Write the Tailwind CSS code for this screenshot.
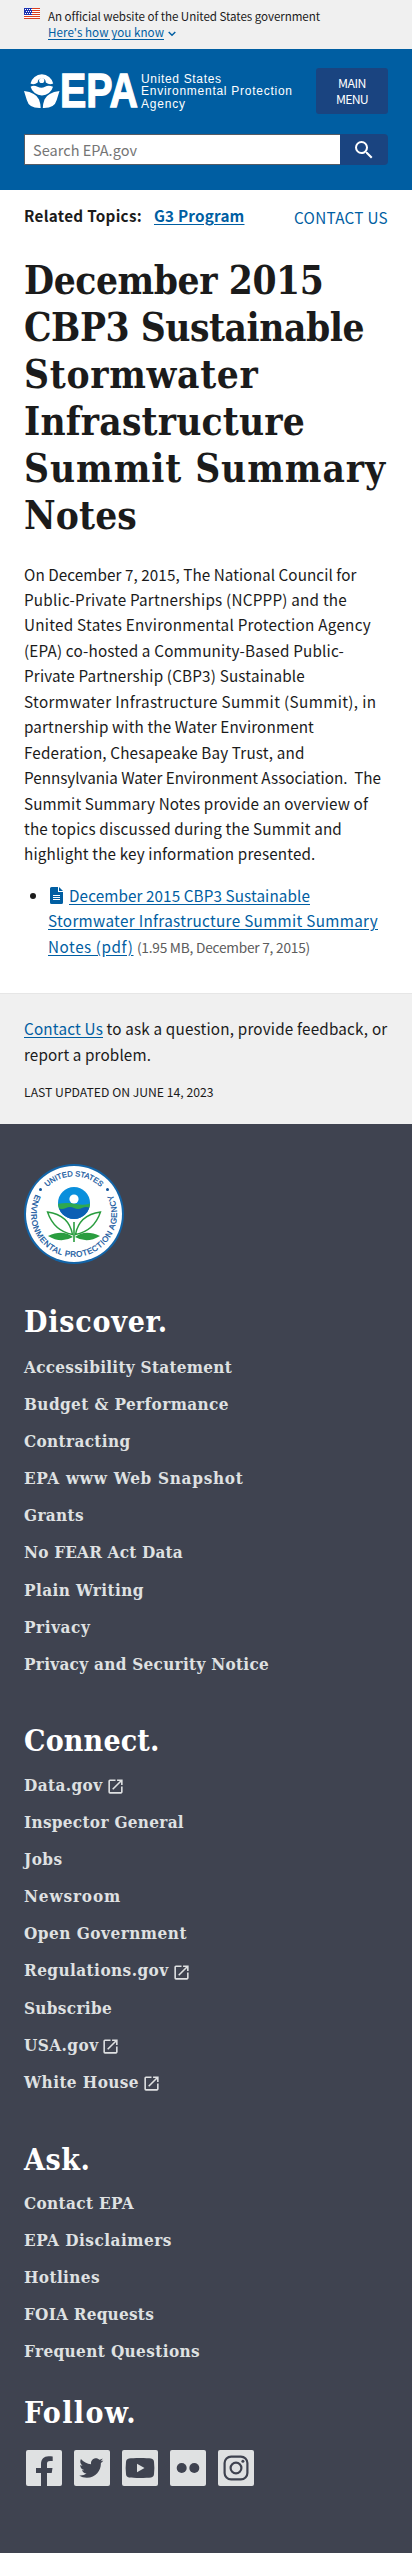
<!DOCTYPE html>
<html lang="en">
<head>
<meta charset="utf-8">
<meta name="viewport" content="width=device-width, initial-scale=1">
<title>December 2015 CBP3 Sustainable Stormwater Infrastructure Summit Summary Notes | US EPA</title>
<script src="https://cdn.jsdelivr.net/npm/@tailwindcss/browser@4"></script>
</head>
<body class="w-[412px] bg-white font-['Noto_Sans_CJK_SC','Open_Sans',sans-serif] text-[15.25px] leading-[25.5px] text-[#1b1b1b] whitespace-nowrap">

<section class="h-[49px] bg-[#f0f0f0] flex gap-2 px-6 pt-2">
  <svg class="w-4 h-[11px] shrink-0" viewBox="0 0 16 11">
    <rect width="16" height="11" fill="#fff"/>
    <path d="M0 .5h16M0 2.5h16M0 4.5h16M0 6.5h16M0 8.5h16M0 10.5h16" stroke="#db3e1f"/>
    <rect width="8" height="7" fill="#1e33b1"/>
    <path d="M1 1.5h7M2 3.5h6M1 5.5h7" stroke="#fff" stroke-dasharray="1 1"/>
  </svg>
  <div class="text-[11.6px] leading-4">
    <p><span data-w="272">An official website of the United States government</span></p>
    <a class="flex items-center text-[#005ea2]"><span class="underline underline-offset-2" data-w="116">Here's how you know</span>
      <svg class="w-2 h-2 ml-1 mt-1" viewBox="0 0 8 8" fill="none" stroke="#005ea2" stroke-width="1.5"><path d="M.7 2 4 5.2 7.3 2"/></svg></a>
  </div>
</section>

<header class="h-[141px] bg-[#005ea2] px-6 pt-[19px]">
  <div class="flex justify-between">
    <svg class="w-[272px] h-[46px] overflow-visible" viewBox="24 68 272 46" fill="#fff">
      <path d="M30.500 83.500A11.600 11.600 0 0 1 53.200 83.500Q49.500 85.500 45.800 82.500A4 4 0 1 0 37.700 82.500Q34 85.500 30.500 83.500Z"/>
      <circle cx="41.700" cy="80.500" r="2.600"/>
      <path d="M30.600 86.800Q33.500 84.800 37.500 86.700T45 86.700T53 86.800A11.600 11.600 0 0 1 42 95.500A11.600 11.600 0 0 1 30.600 86.800Z"/>
      <path d="M24 91Q36 92.500 39 99.500Q40.700 104 40.700 108Q29 108.500 26.800 100Z"/>
      <path d="M59.500 91Q47.500 92.500 44.500 99.500Q42.800 104 42.800 108Q54.500 108.500 56.700 100Z"/>
      <text x="60" y="106.800" font-family="Liberation Sans" font-weight="700" font-size="48" textLength="78" lengthAdjust="spacingAndGlyphs" stroke="#fff" stroke-width="1.300">EPA</text>
      <g font-family="Liberation Sans" font-size="12">
        <text x="141" y="82.500" textLength="80">United States</text>
        <text x="141" y="95" textLength="151">Environmental Protection</text>
        <text x="141" y="108" textLength="44">Agency</text>
      </g>
    </svg>
    <button class="w-[72px] h-[46px] bg-[#1a4480] rounded-[3px] text-white text-center text-[12.3px] leading-4"><span data-w="28">MAIN</span><br><span data-w="32">MENU</span></button>
  </div>
  <form class="mt-5 flex h-[31px]">
    <div class="w-[316px] h-[31px] bg-white border border-[#565c65] border-r-0 pl-2 text-[14.5px] leading-[29px] text-[#757575]"><span data-w="104">Search EPA.gov</span></div>
    <div class="w-12 bg-[#1a4480] rounded-r flex items-center justify-center">
      <svg class="w-6 h-6" viewBox="0 0 24 24" fill="#fff"><path d="M15.500 14h-.79l-.28-.27A6.471 6.471 0 0 0 16 9.500 6.500 6.500 0 1 0 9.500 16c1.610 0 3.090-.59 4.230-1.570l.27.28v.79l5 4.990L20.490 19l-4.990-5zm-6 0C7.010 14 5 11.990 5 9.500S7.010 5 9.500 5 14 7.010 14 9.500 11.990 14 9.500 14z"/></svg>
    </div>
  </form>
</header>

<main class="px-6 h-[803px]">
  <div class="flex justify-between pt-[13px]">
    <p class="font-bold flex"><span data-w="118">Related Topics:</span><a class="ml-[12px] text-[#005ea2] underline underline-offset-2" data-w="90.5">G3 Program</a></p>
    <a class="text-[#005ea2] pt-0.5" data-w="94">CONTACT US</a>
  </div>
  <h1 class="mt-[26px] font-['DejaVu_Serif_Condensed','DejaVu_Serif',serif] [font-stretch:condensed] font-bold text-[38.5px] leading-[47px] h-[285px]">
    <span data-w="299.5">December 2015</span><br>
    <span data-w="340">CBP3 Sustainable</span><br>
    <span data-w="234.5">Stormwater</span><br>
    <span data-w="281">Infrastructure</span><br>
    <span data-w="362">Summit Summary</span><br>
    <span data-w="113">Notes</span>
  </h1>
  <p class="mt-[20px] leading-[25.450px]">
    <span data-w="332.5">On December 7, 2015, The National Council for</span><br>
    <span data-w="323">Public-Private Partnerships (NCPPP) and the</span><br>
    <span data-w="347">United States Environmental Protection Agency</span><br>
    <span data-w="320">(EPA) co-hosted a Community-Based Public-</span><br>
    <span data-w="281">Private Partnership (CBP3) Sustainable</span><br>
    <span data-w="352.5">Stormwater Infrastructure Summit (Summit), in</span><br>
    <span data-w="290">partnership with the Water Environment</span><br>
    <span data-w="280.5">Federation, Chesapeake Bay Trust, and</span><br>
    <span class="whitespace-pre" data-w="357">Pennsylvania Water Environment Association.  The</span><br>
    <span data-w="344">Summit Summary Notes provide an overview of</span><br>
    <span data-w="318">the topics discussed during the Summit and</span><br>
    <span data-w="291.5">highlight the key information presented.</span>
  </p>
  <ul class="mt-4">
    <li class="flex">
      <span class="w-6 shrink-0 flex pl-1.5 pt-[10px]"><i class="block w-1.5 h-1.5 rounded-full bg-[#1b1b1b]"></i></span>
      <div>
        <a class="text-[#005ea2] underline underline-offset-2"><svg class="inline-block w-[13px] h-[17px] ml-[2px] mr-[6px] -mt-1" viewBox="0 0 13 17"><path fill="#005ea2" d="M1.500 0H8v5h5v10.500A1.500 1.500 0 0 1 11.500 17h-10A1.500 1.500 0 0 1 0 15.500v-14A1.500 1.500 0 0 1 1.500 0ZM9 0l4 4H9Z"/><path d="M3 8.500h7M3 10.500h7M3 12.500h7" stroke="#fff"/></svg><span data-w="241">December 2015 CBP3 Sustainable</span><br><span data-w="330">Stormwater Infrastructure Summit Summary</span><br><span data-w="85.5">Notes (pdf)</span></a>
        <span class="text-[13.700px] text-[#5c5c5c]" data-w="173">(1.95 MB, December 7, 2015)</span>
      </div>
    </li>
  </ul>
</main>

<section class="h-[131px] bg-[#f0f0f0] border-t border-[#e6e6e6] px-6 pt-[22px]">
  <p><a class="text-[#005ea2] underline underline-offset-2" data-w="79">Contact Us</a> <span data-w="281">to ask a question, provide feedback, or</span><br><span data-w="127">report a problem.</span></p>
  <p class="mt-[13px] text-[12.200px]"><span data-w="189.5">LAST UPDATED ON JUNE 14, 2023</span></p>
</section>

<footer class="h-[1429px] bg-[#3f4350] px-6 pt-10 font-['DejaVu_Serif_Condensed','DejaVu_Serif',serif] [font-stretch:condensed] font-bold text-[17px] leading-[37.100px] text-[#dfe1e2]">
  <svg class="w-[100px] h-[100px]" viewBox="-50 -50 100 100">
    <defs>
      <path id="ringTop" d="M-37.800 0A37.800 37.800 0 0 1 37.800 0"/>
      <path id="ringLow" d="M-38.700 -18.500A42.900 42.900 0 1 0 38.700 -18.500"/>
      <clipPath id="ball"><circle cy="-11" r="16"/></clipPath>
    </defs>
    <circle r="50" fill="#1365a8"/><circle r="48" fill="#fff"/>
    <g font-family="Liberation Sans" font-weight="400" fill="#10549c" stroke="#10549c" stroke-width=".25">
      <text font-size="7.600"><textPath href="#ringTop" startOffset="50%" text-anchor="middle">UNITED STATES</textPath></text>
      <text font-size="8" letter-spacing=".55"><textPath href="#ringLow" startOffset="50%" text-anchor="middle">ENVIRONMENTAL PROTECTION AGENCY</textPath></text>
    </g>
    <g fill="#10549c"><circle cx="-33.500" cy="-24.500" r="1.500"/><circle cx="33.500" cy="-24.500" r="1.500"/></g>
    <g clip-path="url(#ball)">
      <rect x="-17" y="-28" width="34" height="34" fill="#0a8fdc"/>
      <path d="M-17-10Q-6-12 2-10T17-11V-5H-17Z" fill="#2fa84f"/>
      <path d="M-17-6Q-12-4-8-6T0-6T8-6T17-6V6H-17Z" fill="#0c5fb4"/>
      <circle cy="-15" r="4.600" fill="#fff"/>
    </g>
    <path d="M0 8V28" stroke="#2a9d3f" stroke-width="1.600"/>
    <g fill="none" stroke="#2a9d3f" stroke-width="1.400"><path d="M-26.500-2Q-20 17-1.500 20.500Q-5 1-26.500-2Z"/><path d="M26.500-2Q20 17 1.500 20.500Q5 1 26.500-2Z"/></g>
    <path d="M-26 22Q-11 15-1 23Q-13 30-26 22ZM26 22Q11 15 1 23Q13 30 26 22Z" fill="#2a9d3f"/>
  </svg>
  <nav class="mt-[39px] h-[419px]">
    <h2 class="text-white text-[30px] leading-[38px] mb-[8px]"><span data-w="144">Discover.</span></h2>
    <ul>
      <li><span data-w="208">Accessibility Statement</span></li>
      <li><span data-w="205">Budget &amp; Performance</span></li>
      <li><span data-w="106.5">Contracting</span></li>
      <li><span data-w="219.5">EPA www Web Snapshot</span></li>
      <li><span data-w="60">Grants</span></li>
      <li><span data-w="159">No FEAR Act Data</span></li>
      <li><span data-w="120">Plain Writing</span></li>
      <li><span data-w="66.5">Privacy</span></li>
      <li><span data-w="245">Privacy and Security Notice</span></li>
    </ul>
  </nav>
  <nav class="h-[419px]">
    <h2 class="text-white text-[30px] leading-[38px] mb-[7px]"><span data-w="135.5">Connect.</span></h2>
    <ul>
      <li class="flex items-center gap-[3px]"><span data-w="78.5">Data.gov</span><svg class="w-[19px] h-[19px] mt-0.5" viewBox="0 0 24 24" fill="#dfe1e2"><path d="M19 19H5V5h7V3H5a2 2 0 0 0-2 2v14a2 2 0 0 0 2 2h14c1.100 0 2-.9 2-2v-7h-2v7zM14 3v2h3.590l-9.830 9.830 1.410 1.410L19 6.410V10h2V3h-7z"/></svg></li>
      <li><span data-w="160">Inspector General</span></li>
      <li><span data-w="38.5">Jobs</span></li>
      <li><span data-w="97">Newsroom</span></li>
      <li><span data-w="163">Open Government</span></li>
      <li class="flex items-center gap-[3px]"><span data-w="144.5">Regulations.gov</span><svg class="w-[19px] h-[19px] mt-0.5" viewBox="0 0 24 24" fill="#dfe1e2"><path d="M19 19H5V5h7V3H5a2 2 0 0 0-2 2v14a2 2 0 0 0 2 2h14c1.100 0 2-.9 2-2v-7h-2v7zM14 3v2h3.590l-9.830 9.830 1.410 1.410L19 6.410V10h2V3h-7z"/></svg></li>
      <li><span data-w="88">Subscribe</span></li>
      <li class="flex items-center gap-[3px]"><span data-w="74.5">USA.gov</span><svg class="w-[19px] h-[19px] mt-0.5" viewBox="0 0 24 24" fill="#dfe1e2"><path d="M19 19H5V5h7V3H5a2 2 0 0 0-2 2v14a2 2 0 0 0 2 2h14c1.100 0 2-.9 2-2v-7h-2v7zM14 3v2h3.590l-9.830 9.830 1.410 1.410L19 6.410V10h2V3h-7z"/></svg></li>
      <li class="flex items-center gap-[3px]"><span data-w="115">White House</span><svg class="w-[19px] h-[19px] mt-0.5" viewBox="0 0 24 24" fill="#dfe1e2"><path d="M19 19H5V5h7V3H5a2 2 0 0 0-2 2v14a2 2 0 0 0 2 2h14c1.100 0 2-.9 2-2v-7h-2v7zM14 3v2h3.590l-9.830 9.830 1.410 1.410L19 6.410V10h2V3h-7z"/></svg></li>
    </ul>
  </nav>
  <nav class="h-[253px]">
    <h2 class="text-white text-[30px] leading-[38px] mb-[6px]"><span data-w="66.5">Ask.</span></h2>
    <ul>
      <li><span data-w="110">Contact EPA</span></li>
      <li><span data-w="148">EPA Disclaimers</span></li>
      <li><span data-w="76">Hotlines</span></li>
      <li><span data-w="130">FOIA Requests</span></li>
      <li><span data-w="176">Frequent Questions</span></li>
    </ul>
  </nav>
  <h2 class="text-white text-[30px] leading-[38px]"><span data-w="113">Follow.</span></h2>
  <div class="mt-[18px] pl-0.5 flex gap-3">
    <svg class="w-9 h-9" viewBox="0 0 36 36"><rect width="36" height="36" rx="2" fill="#dfe1e2"/><path fill="#3f4350" d="M15 36V23H10v-5h5v-3.500C15 9 18 6.300 22.500 6.300c1.600 0 3 .1 4.200.3v4.300h-2.500c-2.600 0-3.200 1.200-3.200 3.100v4h5.500l-.8 5H21v13Z"/></svg>
    <svg class="w-9 h-9" viewBox="0 0 36 36"><rect width="36" height="36" rx="2" fill="#dfe1e2"/><g transform="translate(3.500 3.600) scale(1.150)"><path fill="#3f4350" d="M22.460 6c-.77.35-1.600.58-2.460.69.88-.53 1.560-1.370 1.880-2.380-.83.5-1.750.85-2.720 1.050C18.370 4.500 17.260 4 16 4c-2.350 0-4.270 1.920-4.270 4.290 0 .34.04.67.11.98C8.280 9.090 5.110 7.380 3 4.790c-.37.63-.58 1.370-.58 2.150 0 1.490.75 2.810 1.910 3.560-.71 0-1.370-.2-1.950-.5v.03c0 2.080 1.480 3.820 3.440 4.210a4.220 4.220 0 0 1-1.930.07 4.280 4.280 0 0 0 4 2.980 8.521 8.521 0 0 1-5.330 1.840c-.34 0-.68-.02-1.020-.06C3.440 20.290 5.700 21 8.120 21 16 21 20.330 14.460 20.330 8.790c0-.19 0-.37-.01-.56.84-.6 1.560-1.360 2.140-2.230z"/></g></svg>
    <svg class="w-9 h-9" viewBox="0 0 36 36"><rect width="36" height="36" rx="2" fill="#dfe1e2"/><path fill="#3f4350" d="M18 8c5 0 9 .2 11 .5 2 .4 3 1.500 3 3.500.5 4 .5 8 0 12 0 2-1 3.100-3 3.500-4 .6-18 .6-22 0-2-.4-3-1.500-3-3.500-.5-4-.5-8 0-12 0-2 1-3.100 3-3.500C9 8.200 13 8 18 8Z"/><path d="M15 13.800 22.500 18 15 22.200Z" fill="#dfe1e2"/></svg>
    <svg class="w-9 h-9" viewBox="0 0 36 36"><rect width="36" height="36" rx="2" fill="#dfe1e2"/><g fill="#3f4350"><circle cx="11.700" cy="18" r="5"/><circle cx="24.300" cy="18" r="5"/></g></svg>
    <svg class="w-9 h-9" viewBox="0 0 36 36"><rect width="36" height="36" rx="2" fill="#dfe1e2"/><g fill="none" stroke="#3f4350" stroke-width="2.200"><rect x="6.600" y="6.600" width="22.800" height="22.800" rx="6.500"/><circle cx="18" cy="18" r="5.400"/></g><circle cx="24.900" cy="11.200" r="1.500" fill="#3f4350"/></svg>
  </div>
</footer>

<script>
  // Track each line out to the width given in data-w, whatever the font's own advances are.
  function fitLines() {
    for (const el of document.querySelectorAll('[data-w]')) {
      el.style.letterSpacing = '0px';
      const range = document.createRange();
      range.selectNodeContents(el);
      const gap = (Number(el.dataset.w) - range.getBoundingClientRect().width) / el.textContent.length;
      el.style.letterSpacing = gap.toFixed(3) + 'px';
    }
  }
  // The stylesheet can arrive after this script; a change of the page's size means it has.
  new ResizeObserver(fitLines).observe(document.body);
  window.addEventListener('load', fitLines);
  document.fonts.ready.then(fitLines);
</script>
</body>
</html>
